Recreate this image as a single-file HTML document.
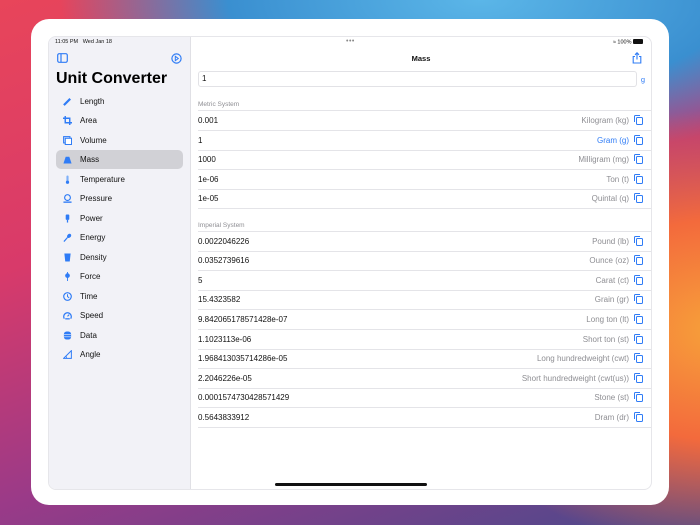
<!DOCTYPE html>
<html><head><meta charset="utf-8"><style>
*{margin:0;padding:0;box-sizing:border-box}
body{width:700px;height:525px;overflow:hidden;position:relative;font-family:"Liberation Sans",sans-serif;
background:
radial-gradient(ellipse 300px 220px at 720px 330px,#f7a23a 0%,#f36a3c 50%,rgba(240,80,80,0) 100%),
radial-gradient(ellipse 420px 160px at 480px 0px,#5bb6e8 0%,#3a8fd0 60%,rgba(40,110,190,0) 100%),
linear-gradient(160deg,#e8455a 0%,#d83a6a 35%,#9a3a88 65%,#4a4a8c 100%);}
.frame{position:absolute;left:31px;top:19px;width:638px;height:486px;background:#fff;border-radius:18px}
.screen{position:absolute;left:48px;top:36px;width:604px;height:454px;border-radius:8px;overflow:hidden;background:#fff;border:1px solid #e6e6ea}
.side{position:absolute;left:0;top:0;width:142px;height:100%;background:#f2f2f7;border-right:1px solid #e0e0e5}
.st{position:absolute;font-size:5.5px;color:#111;top:2px}
.title{position:absolute;left:7px;top:33px;font-size:16px;font-weight:bold;color:#000}
.item{position:absolute;left:7px;width:127px;height:19px;font-size:8px;color:#111;line-height:19px;padding-left:24px;border-radius:5px}
.item.sel{background:#d1d1d6}
.ic{position:absolute;left:7px;top:5px;width:9px;height:9px}
.main{position:absolute;left:142px;top:0;right:0;height:100%}
.row{position:absolute;left:7px;right:0;height:20px;border-bottom:1px solid #e4e4e8;font-size:8px;color:#111;line-height:20px}
.row .u{position:absolute;right:22px;top:0;color:#8e8e93}
.row .cp{position:absolute;right:8px;top:6px;width:7px;height:8px;border:1.2px solid #2f7cf6;border-radius:1.5px}
.row .cp:before{content:"";position:absolute;left:-3px;top:-3px;width:5px;height:6px;border-left:1.2px solid #2f7cf6;border-top:1.2px solid #2f7cf6;border-radius:1.5px 0 0 0}
.hd{position:absolute;left:7px;font-size:6.5px;color:#8e8e93}
</style></head><body>
<div class="frame"></div>
<div class="screen">
<div class="side">
<div class="st" style="left:6px">11:05 PM&nbsp;&nbsp; Wed Jan 18</div>
<svg style="position:absolute;left:8px;top:16px" width="11" height="10"><rect x="0.7" y="0.7" width="9.6" height="8.6" rx="1.5" fill="none" stroke="#2f7cf6" stroke-width="1.2"/><line x1="4" y1="1" x2="4" y2="9" stroke="#2f7cf6" stroke-width="1.2"/></svg>
<svg style="position:absolute;left:122px;top:16px" width="11" height="11"><circle cx="5.5" cy="5.5" r="4.6" fill="none" stroke="#2f7cf6" stroke-width="1.2"/><path d="M4.3 3.3L7.3 5.5L4.3 7.7Z" fill="none" stroke="#2f7cf6" stroke-width="1"/></svg>
<div class="title">Unit Converter</div>
<div class="item" style="top:55px"><svg class="ic" viewBox="0 0 10 10"><path d="M1 9L8 2" stroke="#2f7cf6" stroke-width="2.4"/></svg>Length</div>
<div class="item" style="top:74px"><svg class="ic" viewBox="0 0 10 10"><path d="M2.5 0V7.5H10M0 2.5H7.5V10" fill="none" stroke="#2f7cf6" stroke-width="1.6"/></svg>Area</div>
<div class="item" style="top:94px"><svg class="ic" viewBox="0 0 10 10"><rect x="0.7" y="0.7" width="7" height="7" fill="none" stroke="#2f7cf6" stroke-width="1.2"/><rect x="2.5" y="2.5" width="7" height="7" fill="#fff" stroke="#2f7cf6" stroke-width="1.2"/></svg>Volume</div>
<div class="item sel" style="top:113px"><svg class="ic" viewBox="0 0 10 10"><path d="M3 2H7L9.5 9.5H0.5Z" fill="#2f7cf6"/></svg>Mass</div>
<div class="item" style="top:133px"><svg class="ic" viewBox="0 0 10 10"><rect x="3.8" y="0.5" width="2.4" height="7" rx="1.2" fill="#7fb0f8"/><circle cx="5" cy="8" r="1.8" fill="#2f7cf6"/></svg>Temperature</div>
<div class="item" style="top:152px"><svg class="ic" viewBox="0 0 10 10"><circle cx="5" cy="4" r="3.2" fill="none" stroke="#2f7cf6" stroke-width="1.3"/><rect x="0.5" y="8.3" width="9" height="1.5" fill="#2f7cf6"/></svg>Pressure</div>
<div class="item" style="top:172px"><svg class="ic" viewBox="0 0 10 10"><rect x="3" y="0.5" width="4" height="6" rx="1" fill="#2f7cf6"/><rect x="4.3" y="6.5" width="1.4" height="3" fill="#2f7cf6"/></svg>Power</div>
<div class="item" style="top:191px"><svg class="ic" viewBox="0 0 10 10"><path d="M1 9.5L5 5" stroke="#2f7cf6" stroke-width="1.3"/><ellipse cx="6.8" cy="3.2" rx="2.6" ry="2" transform="rotate(-45 6.8 3.2)" fill="#2f7cf6"/></svg>Energy</div>
<div class="item" style="top:211px"><svg class="ic" viewBox="0 0 10 10"><path d="M1.5 0.5H8.5L7.5 9.5H2.5Z" fill="#2f7cf6"/></svg>Density</div>
<div class="item" style="top:230px"><svg class="ic" viewBox="0 0 10 10"><circle cx="5" cy="4" r="2.6" fill="#2f7cf6"/><path d="M5 0V10" stroke="#2f7cf6" stroke-width="1"/></svg>Force</div>
<div class="item" style="top:250px"><svg class="ic" viewBox="0 0 10 10"><circle cx="5" cy="5" r="4.2" fill="none" stroke="#2f7cf6" stroke-width="1.3"/><path d="M5 2.5V5L6.8 6.5" fill="none" stroke="#2f7cf6" stroke-width="1.1"/></svg>Time</div>
<div class="item" style="top:269px"><svg class="ic" viewBox="0 0 10 10"><path d="M1.5 8.5A4.2 4.2 0 1 1 8.5 8.5" fill="none" stroke="#2f7cf6" stroke-width="1.4"/><path d="M5 6L6.8 4" stroke="#2f7cf6" stroke-width="1.2"/><rect x="2.5" y="8" width="5" height="1.4" fill="#2f7cf6"/></svg>Speed</div>
<div class="item" style="top:289px"><svg class="ic" viewBox="0 0 10 10"><rect x="1" y="0.5" width="8" height="9" rx="3" fill="#2f7cf6"/><path d="M1 4H9M1 6.5H9" stroke="#f2f2f7" stroke-width="0.7"/></svg>Data</div>
<div class="item" style="top:308px"><svg class="ic" viewBox="0 0 10 10"><path d="M0.7 9.3L9.3 0.7V9.3Z" fill="none" stroke="#2f7cf6" stroke-width="1.1"/><path d="M4 9.3A3.5 3.5 0 0 0 3.2 6.8" fill="none" stroke="#2f7cf6" stroke-width="0.9"/></svg>Angle</div>
</div>
<div class="main">
<div style="position:absolute;left:155px;top:1px;font-size:7px;color:#888;letter-spacing:0.5px">•••</div>
<div class="st" style="right:8px;">&#8776; 100% <span style="display:inline-block;width:10px;height:5px;background:#111;border-radius:1px;vertical-align:-0.5px"></span></div>
<div style="position:absolute;left:0;right:0;top:17px;text-align:center;font-size:7.5px;font-weight:bold;color:#111">Mass</div>
<svg style="position:absolute;right:9px;top:15px" width="10" height="12"><path d="M3 4.5H1.2V11H8.8V4.5H7" fill="none" stroke="#2f7cf6" stroke-width="1.1"/><path d="M5 7.5V0.8M3 2.8L5 0.8L7 2.8" fill="none" stroke="#2f7cf6" stroke-width="1.1"/></svg>
<div style="position:absolute;left:7px;top:34px;width:439px;height:16px;border:1px solid #e2e2e6;border-radius:3px;font-size:8px;line-height:14px;padding-left:3px;color:#111">1</div>
<div style="position:absolute;right:6px;top:38px;font-size:7.5px;color:#2f7cf6">g</div>
<div class="hd" style="top:64px">Metric System</div>
<div style="position:absolute;left:7px;right:0;top:73px;border-top:1px solid #e4e4e8"></div>
<div class="row" style="top:74px">0.001<span class="u">Kilogram (kg)</span><i class="cp"></i></div>
<div class="row" style="top:94px">1<span class="u" style="color:#2f7cf6">Gram (g)</span><i class="cp"></i></div>
<div class="row" style="top:113px">1000<span class="u">Milligram (mg)</span><i class="cp"></i></div>
<div class="row" style="top:133px">1e-06<span class="u">Ton (t)</span><i class="cp"></i></div>
<div class="row" style="top:152px">1e-05<span class="u">Quintal (q)</span><i class="cp"></i></div>
<div class="hd" style="top:185px">Imperial System</div>
<div style="position:absolute;left:7px;right:0;top:194px;border-top:1px solid #e4e4e8"></div>
<div class="row" style="top:195px">0.0022046226<span class="u">Pound (lb)</span><i class="cp"></i></div>
<div class="row" style="top:214px">0.0352739616<span class="u">Ounce (oz)</span><i class="cp"></i></div>
<div class="row" style="top:234px">5<span class="u">Carat (ct)</span><i class="cp"></i></div>
<div class="row" style="top:253px">15.4323582<span class="u">Grain (gr)</span><i class="cp"></i></div>
<div class="row" style="top:273px">9.842065178571428e-07<span class="u">Long ton (lt)</span><i class="cp"></i></div>
<div class="row" style="top:293px">1.1023113e-06<span class="u">Short ton (st)</span><i class="cp"></i></div>
<div class="row" style="top:312px">1.968413035714286e-05<span class="u">Long hundredweight (cwt)</span><i class="cp"></i></div>
<div class="row" style="top:332px">2.2046226e-05<span class="u">Short hundredweight (cwt(us))</span><i class="cp"></i></div>
<div class="row" style="top:351px">0.0001574730428571429<span class="u">Stone (st)</span><i class="cp"></i></div>
<div class="row" style="top:371px">0.5643833912<span class="u">Dram (dr)</span><i class="cp"></i></div>
<div style="position:absolute;left:84px;top:446px;width:152px;height:2.5px;background:#111;border-radius:2px"></div>
</div>
</div>
</body></html>
